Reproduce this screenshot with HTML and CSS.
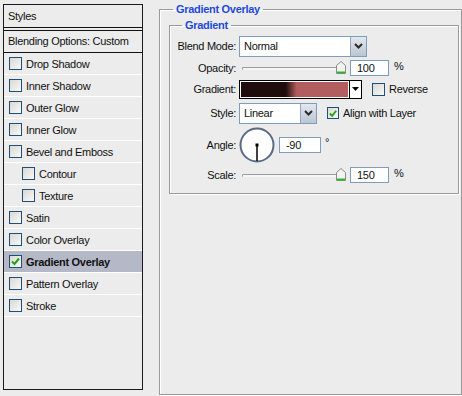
FILE: index.html
```html
<!DOCTYPE html>
<html lang="en">
<head>
    <meta charset="UTF-8">
    <title>Layer Style - Gradient Overlay</title>
    <link rel="stylesheet" href="styles.css">
</head>
<body>
    <div class="dialog">
        <!-- Left: list of layer styles -->
        <aside class="styles-panel">
            <div class="panel-head">Styles</div>
            <div class="panel-blend">Blending Options: Custom</div>
            <ul class="style-list">
                <li><span class="check"></span>Drop Shadow</li>
                <li><span class="check"></span>Inner Shadow</li>
                <li><span class="check"></span>Outer Glow</li>
                <li><span class="check"></span>Inner Glow</li>
                <li><span class="check"></span>Bevel and Emboss</li>
                <li class="sub"><span class="check"></span>Contour</li>
                <li class="sub"><span class="check"></span>Texture</li>
                <li><span class="check"></span>Satin</li>
                <li><span class="check"></span>Color Overlay</li>
                <li class="selected">
                    <span class="check">
                        <svg width="11" height="11" viewBox="0 0 11 11"><path d="M2 5.5 L4.5 8 L9 2.5" fill="none" stroke="#1ea31e" stroke-width="2"/></svg>
                    </span>Gradient Overlay
                </li>
                <li><span class="check"></span>Pattern Overlay</li>
                <li><span class="check"></span>Stroke</li>
            </ul>
        </aside>

        <!-- Right: settings -->
        <fieldset class="group outer">
            <legend>Gradient Overlay</legend>
            <fieldset class="group inner">
                <legend>Gradient</legend>

                <div class="row r-blend">
                    <span class="label">Blend Mode:</span>
                    <div class="select blend-select">
                        <span class="value">Normal</span>
                        <span class="drop"><svg width="9" height="6" viewBox="0 0 9 6"><path d="M1 1 L4.5 4.5 L8 1" fill="none" stroke="#2b2b2b" stroke-width="2"/></svg></span>
                    </div>
                </div>

                <div class="row r-opacity">
                    <span class="label">Opacity:</span>
                    <div class="slider">
                        <span class="track"></span>
                        <span class="thumb"><svg width="10" height="13" viewBox="0 0 10 13"><path d="M0.5 4.5 L5 0.5 L9.5 4.5 V12.5 H0.5 Z" fill="#f2f2ee" stroke="#8c8c8c"/><rect x="1" y="10.5" width="8" height="2" fill="#2fb52f"/></svg></span>
                    </div>
                    <span class="field num">100</span>
                    <span class="unit">%</span>
                </div>

                <div class="row r-gradient">
                    <span class="label">Gradient:</span>
                    <div class="gradient-pick">
                        <span class="swatch"></span>
                        <span class="gdrop"><svg width="7" height="4" viewBox="0 0 7 4"><path d="M0 0 H7 L3.5 4 Z" fill="#000"/></svg></span>
                    </div>
                    <span class="check"></span>
                    <span class="opt">Reverse</span>
                </div>

                <div class="row r-style">
                    <span class="label">Style:</span>
                    <div class="select style-select">
                        <span class="value">Linear</span>
                        <span class="drop"><svg width="9" height="6" viewBox="0 0 9 6"><path d="M1 1 L4.5 4.5 L8 1" fill="none" stroke="#2b2b2b" stroke-width="2"/></svg></span>
                    </div>
                    <span class="check">
                        <svg width="11" height="11" viewBox="0 0 11 11"><path d="M2 5.5 L4.5 8 L9 2.5" fill="none" stroke="#1ea31e" stroke-width="2"/></svg>
                    </span>
                    <span class="opt">Align with Layer</span>
                </div>

                <div class="row r-angle">
                    <span class="label">Angle:</span>
                    <div class="dial">
                        <svg width="36" height="36" viewBox="0 0 36 36">
                            <circle cx="18" cy="18" r="16.5" fill="#fff" stroke="#5b6a86" stroke-width="2"/>
                            <line x1="18" y1="18" x2="18" y2="34" stroke="#000" stroke-width="1.5"/>
                            <rect x="16.5" y="16.5" width="3" height="3" fill="#000"/>
                        </svg>
                    </div>
                    <span class="field angle-field">-90</span>
                    <span class="deg">&deg;</span>
                </div>

                <div class="row r-scale">
                    <span class="label">Scale:</span>
                    <div class="slider">
                        <span class="track"></span>
                        <span class="thumb"><svg width="10" height="13" viewBox="0 0 10 13"><path d="M0.5 4.5 L5 0.5 L9.5 4.5 V12.5 H0.5 Z" fill="#f2f2ee" stroke="#8c8c8c"/><rect x="1" y="10.5" width="8" height="2" fill="#2fb52f"/></svg></span>
                    </div>
                    <span class="field num">150</span>
                    <span class="unit">%</span>
                </div>
            </fieldset>
        </fieldset>
    </div>
</body>
</html>
```

FILE: styles.css
```css
body {
    margin: 0;
    background-color: #ececec;
    font-family: 'Liberation Sans', Arial, sans-serif;
    font-size: 11px;
    letter-spacing: -0.3px;
    color: #111;
    overflow: hidden;
    height: 396px;
}

.dialog {
    display: flex;
    align-items: flex-start;
    padding: 3px 0 0 3px;
}

/* Styles list */
.styles-panel {
    width: 140px;
    height: 386px;
    box-sizing: border-box;
    border: 1px solid #1a1a1a;
    margin-top: 1px;
    flex-shrink: 0;
}

.panel-head {
    height: 22px;
    line-height: 22px;
    padding-left: 4px;
    border-bottom: 1px solid #111;
    margin-bottom: 2px;
}

.panel-blend {
    height: 21px;
    line-height: 21px;
    padding-left: 4px;
    border-top: 1px solid #111;
    border-bottom: 1px solid #111;
}

.style-list {
    list-style: none;
    margin: 0;
    padding: 0;
}

.style-list li {
    display: flex;
    align-items: center;
    height: 21px;
    border-bottom: 1px solid #fff;
    padding-left: 5px;
}

.style-list li.sub {
    padding-left: 18px;
}

.style-list li.selected {
    background-color: #b5b8c7;
    font-weight: bold;
}

.check {
    display: inline-flex;
    align-items: center;
    justify-content: center;
    width: 13px;
    height: 13px;
    box-sizing: border-box;
    border: 1px solid #1f4e79;
    background: linear-gradient(135deg, #dad9d2, #f8f8f6);
    margin-right: 4px;
    flex-shrink: 0;
}

/* Group boxes */
.group {
    margin: 0;
    border: 1px solid #9a9a9a;
    box-shadow: inset 1px 1px 0 #fff, 1px 1px 0 #fff;
    min-width: 0;
}

.group legend {
    color: #1e48d6;
    font-weight: bold;
    line-height: 13px;
    padding: 0 3px;
}

.outer {
    margin-left: 16px;
    width: 360px;
    height: 392px;
    box-sizing: border-box;
    padding: 3px 0 0 9px;
}

.outer > legend {
    margin-left: 4px;
}

.inner {
    width: 290px;
    box-sizing: border-box;
    padding: 3px 0 6px 0;
}

.inner > legend {
    margin-left: 12px;
}

/* Rows */
.row {
    display: flex;
    align-items: center;
}

.row .label {
    width: 66px;
    text-align: right;
    margin-right: 3px;
    flex-shrink: 0;
}

.r-blend { height: 22px; }
.r-opacity { height: 22px; }
.r-gradient { height: 20px; }
.r-style { height: 28px; }
.r-angle { height: 36px; }
.r-scale { height: 24px; }

.select {
    display: flex;
    height: 21px;
    box-sizing: border-box;
    border: 1px solid #7f9db9;
    background-color: #fff;
}

.select .value {
    flex: 1;
    line-height: 19px;
    padding-left: 4px;
}

.select .drop {
    width: 15px;
    display: flex;
    align-items: center;
    justify-content: center;
    background: linear-gradient(#e3e7ee, #bcc5d4);
    border-left: 1px solid #97a6bf;
}

.blend-select { width: 128px; }
.style-select { width: 78px; }

.slider {
    position: relative;
    width: 104px;
    height: 14px;
    margin-left: 3px;
}

.slider .track {
    position: absolute;
    left: 0;
    right: 6px;
    top: 6px;
    height: 3px;
    box-sizing: border-box;
    border-top: 1px solid #9b9b9b;
    border-left: 1px solid #9b9b9b;
    border-radius: 2px 0 0 2px;
    background-color: #f5f5f5;
}

.slider .thumb {
    position: absolute;
    right: 0;
    top: 0;
    width: 10px;
    height: 13px;
}

.field {
    height: 16px;
    box-sizing: border-box;
    border: 1px solid #7f9db9;
    background-color: #fff;
    line-height: 14px;
    padding-left: 6px;
}

.num {
    width: 39px;
    margin-left: 4px;
}

.unit {
    margin-left: 5px;
    margin-top: -4px;
}

.gradient-pick {
    display: flex;
    height: 19px;
}

.swatch {
    width: 111px;
    box-sizing: border-box;
    border: 1px solid #000;
    box-shadow: inset 0 0 0 1px #fff;
    background: linear-gradient(to right, #1f0c0c 0%, #1f0c0c 42%, #b25e5e 52%, #b25e5e 100%);
    background-clip: content-box;
    padding: 1px;
}

.gdrop {
    width: 12px;
    box-sizing: border-box;
    border: 1px solid #000;
    border-left: none;
    background-color: #fff;
    display: flex;
    align-items: center;
    justify-content: center;
}

.r-gradient .check {
    margin-left: 10px;
}

.r-style .check {
    margin-left: 10px;
    width: 12px;
    height: 12px;
}

.dial {
    width: 36px;
    height: 36px;
}

.angle-field {
    width: 42px;
    margin-left: 4px;
}

.deg {
    margin-left: 4px;
    margin-top: -6px;
}
```
